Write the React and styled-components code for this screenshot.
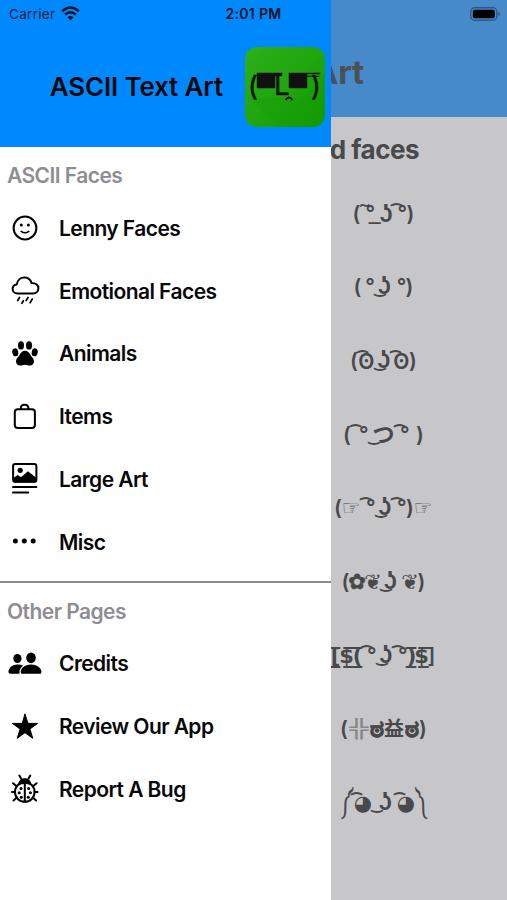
import React from "react"
import styled, { createGlobalStyle } from "styled-components"

const GlobalStyle = createGlobalStyle`
  * {
    box-sizing: border-box;
  }

  body {
    margin: 0;
    font-family: Inter, "Liberation Sans", sans-serif;
    color: #08080a;
  }
`

const Screen = styled.div`
  position: relative;
  width: 507px;
  height: 900px;
  overflow: hidden;
  background: #c7c7c9;
`

const StatusBar = styled.div`
  position: absolute;
  top: 0;
  left: 0;
  z-index: 3;
  display: grid;
  grid-template-columns: 1fr auto 1fr;
  align-items: center;
  width: 100%;
  height: 27px;
  padding: 0 6px 0 9px;
  font-size: 13px;
  color: #06203c;
`

const Carrier = styled.div`
  display: flex;
  align-items: center;
  gap: 6px;
  font-size: 13.5px;
  letter-spacing: 0.3px;
`

const Clock = styled.div`
  margin-right: 3px;
  font-size: 14px;
  font-weight: 600;
  letter-spacing: 0.3px;
  color: #04121f;
`

const Battery = styled.svg`
  justify-self: end;
`

const Page = styled.main`
  width: 507px;
  margin-left: 130px;
  color: #49494b;
`

const PageHeader = styled.header`
  height: 117px;
  padding: 51px 0 0 9px;
  background: #468aca;
  color: #4b5055;
  font-size: 33px;
  line-height: 42px;
  font-weight: 700;

  span {
    display: block;
    width: 225px;
    text-align: right;
    white-space: nowrap;
    letter-spacing: -0.2px;
  }
`

const PageTitle = styled.h2`
  width: 289px;
  margin: 0;
  padding-top: 16px;
  font-size: 26px;
  line-height: 34px;
  font-weight: 700;
  letter-spacing: -0.5px;
  text-align: right;
  white-space: nowrap;
`

const FaceList = styled.ul`
  margin: 10px 0 0;
  padding: 0;
  list-style: none;
`

const FaceRow = styled.li`
  display: flex;
  align-items: center;
  justify-content: center;
  height: 73.65px;
  font-family: Inter, "DejaVu Sans", "Noto Sans CJK JP", sans-serif;
  font-size: 21px;
  line-height: 30px;
  font-weight: 600;
  white-space: pre;
`

const Glyph = styled.span`
  display: flex;
  justify-content: center;
  width: ${p => p.$w}px;
  font-size: ${p => p.$size || 21}px;
  font-weight: ${p => p.$weight || 600};
  opacity: ${p => p.$fade || 1};
  -webkit-text-stroke: ${p => p.$stroke || 0}px;
  transform: translateY(${p => p.$dy || 0}px) scaleX(${p => p.$sx || 1});
`

const Stack = styled.span`
  display: grid;
  width: ${p => p.$w}px;

  > span {
    grid-area: 1 / 1;
  }
`

const Brow = styled.span`
  justify-self: start;
  font-family: "DejaVu Sans", sans-serif;
  transform-origin: 0 50%;
  transform: translateY(2px) scaleX(0.62);
`

const Pupil = styled.span`
  justify-self: end;
  transform: translateY(${p => p.$dy || 0}px);
`

const Smile = styled.span`
  justify-self: start;
  font-family: "DejaVu Sans", sans-serif;
  transform-origin: 0 50%;
  transform: translateY(-2px) scaleX(0.65);
`

const Nose = styled.span`
  justify-self: end;
  font-size: ${p => p.$size || 24}px;
  transform: translateY(-1px);
`

const Drawer = styled.aside`
  position: absolute;
  top: 0;
  left: 0;
  z-index: 2;
  width: 331px;
  height: 900px;
  background: #fff;
`

const DrawerHeader = styled.header`
  display: flex;
  align-items: center;
  justify-content: flex-end;
  gap: 22px;
  height: 147px;
  padding: 27px 6px 0 0;
  background: #0089ff;
`

const AppName = styled.h1`
  margin: -2px 0 0;
  font-size: 26px;
  font-weight: 600;
  letter-spacing: -0.15px;
  white-space: nowrap;
`

const SectionTitle = styled.h3`
  height: 50px;
  margin: 0;
  padding: 14px 0 0 7px;
  font-size: 21px;
  line-height: 30px;
  font-weight: 600;
  letter-spacing: -0.55px;
  color: #8e8e92;
`

const Divider = styled.hr`
  height: 2px;
  margin: 7px 0 0;
  border: none;
  background: #8c8c90;
`

const Item = styled.a`
  display: flex;
  align-items: center;
  gap: 9px;
  height: 62.75px;
  font-size: 21px;
  font-weight: 600;
  letter-spacing: -0.57px;
  white-space: nowrap;
`

const IconBox = styled.svg`
  width: 50px;
  height: 36px;
  fill: none;
  stroke: #000;
  stroke-width: 2;
  stroke-linecap: round;
  stroke-linejoin: round;

  .solid {
    fill: #000;
    stroke: none;
  }
`

const icons = {
  smile: (
    <>
      <circle cx="25" cy="18" r="11.4" />
      <circle className="solid" cx="21.3" cy="15" r="1.5" />
      <circle className="solid" cx="28.4" cy="15" r="1.5" />
      <path d="M21.2 21.4q3.8 2.8 7.6 0" strokeWidth="1.6" />
    </>
  ),
  rain: (
    <>
      <path d="M17.5 20.4c-3 0-4.9-2-4.9-4.5 0-2.5 1.8-4.2 4.2-4.500.6-4 3.600-6.800 7.500-6.800 3.600 0 6.200 2.200 7.200 5.300 4 0 6.900 2.100 6.900 5.300 0 3-2.300 5.200-5.500 5.200z" />
      <path d="M19.5 24.500l-1.800 3M23.400 27.800l-1.500 2.500M28 24.500l-1.800 3M32.300 26l-2.200 3.800" strokeWidth="1.7" />
    </>
  ),
  paw: (
    <g className="solid">
      <ellipse cx="15.3" cy="16.3" rx="3" ry="4" transform="rotate(-12 15.3 16.3)" />
      <ellipse cx="21" cy="9.4" rx="3" ry="4.2" />
      <ellipse cx="29" cy="9.4" rx="3" ry="4.2" />
      <ellipse cx="34.7" cy="16.3" rx="3" ry="4" transform="rotate(12 34.7 16.3)" />
      <path d="M25 14.800c2.600 0 4.200 1.800 5.300 3.900 1.200 2.200 3.700 3.600 3.700 6.900 0 2.300-1.600 4-3.900 4-2 0-3.200-.9-5.100-.9s-3.100.9-5.100.9c-2.300 0-3.900-1.700-3.900-4 0-3.300 2.500-4.700 3.700-6.900 1.100-2.100 2.700-3.900 5.300-3.900z" />
    </g>
  ),
  bag: (
    <>
      <rect x="14.8" y="10.3" width="20.1" height="18.7" rx="3" />
      <path d="M20.7 10c0-2.500 1.600-4.300 3.900-4.300s3.900 1.800 3.900 4.300" />
    </>
  ),
  photo: (
    <>
      <rect x="13.1" y="3" width="23.3" height="17.7" rx="2.2" />
      <circle className="solid" cx="20.2" cy="9.3" r="2.6" />
      <path className="solid" d="M13 17.200l4.700-3.300 3.300 2.400 6.900-6 8.700 6.700v3.700q-.2.800-1.500.8H14.500q-1.300 0-1.500-.9z" />
      <path d="M13 25.900h23.400M13 31.500h15.200" />
    </>
  ),
  dots: (
    <g className="solid">
      <circle cx="15.4" cy="17.1" r="2.5" />
      <circle cx="24.3" cy="17.1" r="2.5" />
      <circle cx="33.2" cy="17.1" r="2.5" />
    </g>
  ),
  people: (
    <g className="solid">
      <ellipse cx="17.4" cy="12.5" rx="4.1" ry="4.6" />
      <ellipse cx="31" cy="11.8" rx="4.8" ry="5.4" />
      <path d="M23 19.700c-1.400-.8-3.300-1.200-5.600-1.200-5.700 0-8.900 3.900-8.900 7.300 0 1.200.7 1.900 2 1.900h9c-.5-3.200 1-6.200 3.500-8z" />
      <path d="M31 18.500c6.600 0 10.400 4 10.400 7.400 0 1.200-.7 1.900-2 1.900H22.700c-1.300 0-2-.7-2-1.900 0-3.400 3.700-7.400 10.300-7.400z" />
    </g>
  ),
  star: (
    <path
      d="M25 5.200l3 9.200h9.600l-7.700 5.700 2.900 9.200-7.800-5.600-7.800 5.600 2.900-9.200-7.700-5.700H22z"
      fill="#000"
      strokeWidth="1"
    />
  ),
  bug: (
    <>
      <circle cx="24.8" cy="21" r="9.8" />
      <path className="solid" d="M18.200 14c.2-4.400 2.900-6.700 6.600-6.700s6.400 2.300 6.600 6.700q-6.600-2-13.200 0z" />
      <path d="M24.800 13v17.500M21.200 7.800L19.300 4.500M28.400 7.800l1.900-3.300M16.300 15l-3.300-2.800M33.300 15l3.300-2.800M15 21h-3M34.600 21h3M16.500 26.800l-3 2.700M33.100 26.800l3 2.700" />
      <g className="solid">
        <circle cx="21" cy="17.5" r="1.5" />
        <circle cx="28.6" cy="17.5" r="1.5" />
        <circle cx="19.2" cy="21.7" r="1.5" />
        <circle cx="30.4" cy="21.7" r="1.5" />
        <circle cx="21.3" cy="26.2" r="1.5" />
        <circle cx="28.3" cy="26.2" r="1.5" />
      </g>
    </>
  ),
}

const faceItems = [
  { icon: "smile", label: "Lenny Faces" },
  { icon: "rain", label: "Emotional Faces" },
  { icon: "paw", label: "Animals" },
  { icon: "bag", label: "Items" },
  { icon: "photo", label: "Large Art" },
  { icon: "dots", label: "Misc" },
]

const otherItems = [
  { icon: "people", label: "Credits" },
  { icon: "star", label: "Review Our App" },
  { icon: "bug", label: "Report A Bug" },
]

const open = { t: "(", w: 7 }
const close = { t: ")", w: 7 }
const eye = { brow: "\u0361", t: "°", w: 15 }
const nose = { smile: "\u035c", t: "ʖ", w: 16 }
const gap = w => ({ t: " ", w })

const faces = [
  [open, { ...eye, brow: "\u0360" }, { t: "\u00a0\u035f", w: 6, dy: -1 }, { t: "ʖ", w: 10, size: 24 }, gap(1), eye, close],
  [open, gap(4), { t: "°", w: 10 }, nose, gap(6), { t: "°", w: 9 }, close],
  [open, { ...eye, t: "ʘ", w: 17, dy: 1 }, nose, { ...eye, t: "ʘ", w: 19, dy: 1 }, close],
  [open, { ...eye, w: 18 }, { smile: "\u035c", t: "つ", w: 26, size: 22 }, eye, gap(7), close],
  [open, { t: "☞", w: 19, weight: 400 }, eye, nose, eye, close, { t: "☞", w: 19, weight: 400 }],
  [open, { t: "✿", w: 16, stroke: 0.8 }, { t: "❦", w: 16 }, nose, gap(5), { t: "❦", w: 16 }, close],
  [
    { t: "[̲̅", w: 8 },
    { t: "$̲̅", w: 14 },
    { t: "(̲̅", w: 8 },
    eye,
    nose,
    eye,
    { t: ")̲̅", w: 8 },
    { t: "$̲̅", w: 12 },
    { t: "]", w: 8 },
  ],
  [
    open,
    { t: "╬", w: 21, size: 18, sx: 1.7, weight: 400, fade: 0.5 },
    { t: "ಠ", w: 16, size: 24, sx: 1.1, weight: 700, stroke: 0.8 },
    { t: "益", w: 19, size: 20, weight: 700 },
    { t: "ಠ", w: 16, size: 24, sx: 1.1, weight: 700, stroke: 0.8 },
    close,
  ],
  [
    { t: "༼", w: 11, sx: 0.7, dy: -1 },
    { ...eye, t: "◕", w: 20 },
    { ...nose, w: 20 },
    gap(3),
    { ...eye, t: "◕", w: 20 },
    { t: "༽", w: 11, sx: 0.7, dy: -1 },
  ],
]

const Part = ({ part }) => {
  if (part.brow) {
    return (
      <Stack $w={part.w}>
        <Brow>{"\u00a0" + part.brow}</Brow>
        <Pupil $dy={part.dy}>{part.t}</Pupil>
      </Stack>
    )
  }
  if (part.smile) {
    return (
      <Stack $w={part.w}>
        <Smile>{"\u00a0" + part.smile}</Smile>
        <Nose $size={part.size}>{part.t}</Nose>
      </Stack>
    )
  }
  return (
    <Glyph
      $w={part.w}
      $size={part.size}
      $weight={part.weight}
      $dy={part.dy}
      $sx={part.sx}
      $fade={part.fade}
      $stroke={part.stroke}
    >
      {part.t}
    </Glyph>
  )
}

const Logo = () => (
  <svg width="80" height="80" viewBox="0 0 80 80">
    <defs>
      <linearGradient id="logoFill" x1="0" y1="0" x2="1" y2="1">
        <stop offset="0" stopColor="#2cb01b" />
        <stop offset="1" stopColor="#149b00" />
      </linearGradient>
    </defs>
    <rect width="80" height="80" rx="12" fill="url(#logoFill)" />
    <path d="M5 52L33 80h35q12 0 12-12V26L60 50z" fill="#0f9500" opacity="0.2" />
    <g fill="#111" stroke="#111" strokeWidth="0.5" fontFamily="Inter, sans-serif">
      <text x="3" y="49" fontSize="27">(</text>
      <text x="66" y="49" fontSize="27">)</text>
      <text x="29" y="48" fontSize="28">L</text>
      <path d="M12 26h25v3h-7v12H12zM44 26h31v1H62V41H44zM62 29h12v.5H62z" />
    </g>
    <path d="M40.5 53q3.500-5 7 0" fill="none" stroke="#111" strokeWidth="2" />
  </svg>
)

const Menu = ({ items }) => (
  <nav>
    {items.map(item => (
      <Item key={item.label}>
        <IconBox viewBox="0 0 50 36">{icons[item.icon]}</IconBox>
        {item.label}
      </Item>
    ))}
  </nav>
)

const App = () => (
  <Screen>
    <GlobalStyle />
    <StatusBar>
      <Carrier>
        Carrier
        <svg width="19" height="15" viewBox="0 0 19 15" fill="none" stroke="#04121f" strokeWidth="2.5">
          <path d="M1.200 5.200q8.300-7.300 16.600 0M4.200 8.500q5.300-4.600 10.600 0" />
          <path d="M6.500 11.200q3-2.500 6 0l-3 3.100z" fill="#04121f" stroke="none" />
        </svg>
      </Carrier>
      <Clock>2:01 PM</Clock>
      <Battery width="31" height="14" viewBox="0 0 31 14">
        <rect x="0.8" y="0.8" width="26" height="12.4" rx="3.8" fill="none" stroke="#2c5987" strokeWidth="1.4" />
        <rect x="2.8" y="2.8" width="22" height="8.4" rx="2" />
        <path d="M28.300 5q2 .5 2 2t-2 2z" fill="#2c5987" />
      </Battery>
    </StatusBar>
    <Drawer>
      <DrawerHeader>
        <AppName>ASCII Text Art</AppName>
        <Logo />
      </DrawerHeader>
      <SectionTitle>ASCII Faces</SectionTitle>
      <Menu items={faceItems} />
      <Divider />
      <SectionTitle>Other Pages</SectionTitle>
      <Menu items={otherItems} />
    </Drawer>
    <Page>
      <PageHeader>
        <span>ASCII Text Art</span>
      </PageHeader>
      <PageTitle>Unsorted faces</PageTitle>
      <FaceList>
        {faces.map((parts, i) => (
          <FaceRow key={i}>
            {parts.map((part, j) => (
              <Part key={j} part={part} />
            ))}
          </FaceRow>
        ))}
      </FaceList>
    </Page>
  </Screen>
)

export default App
